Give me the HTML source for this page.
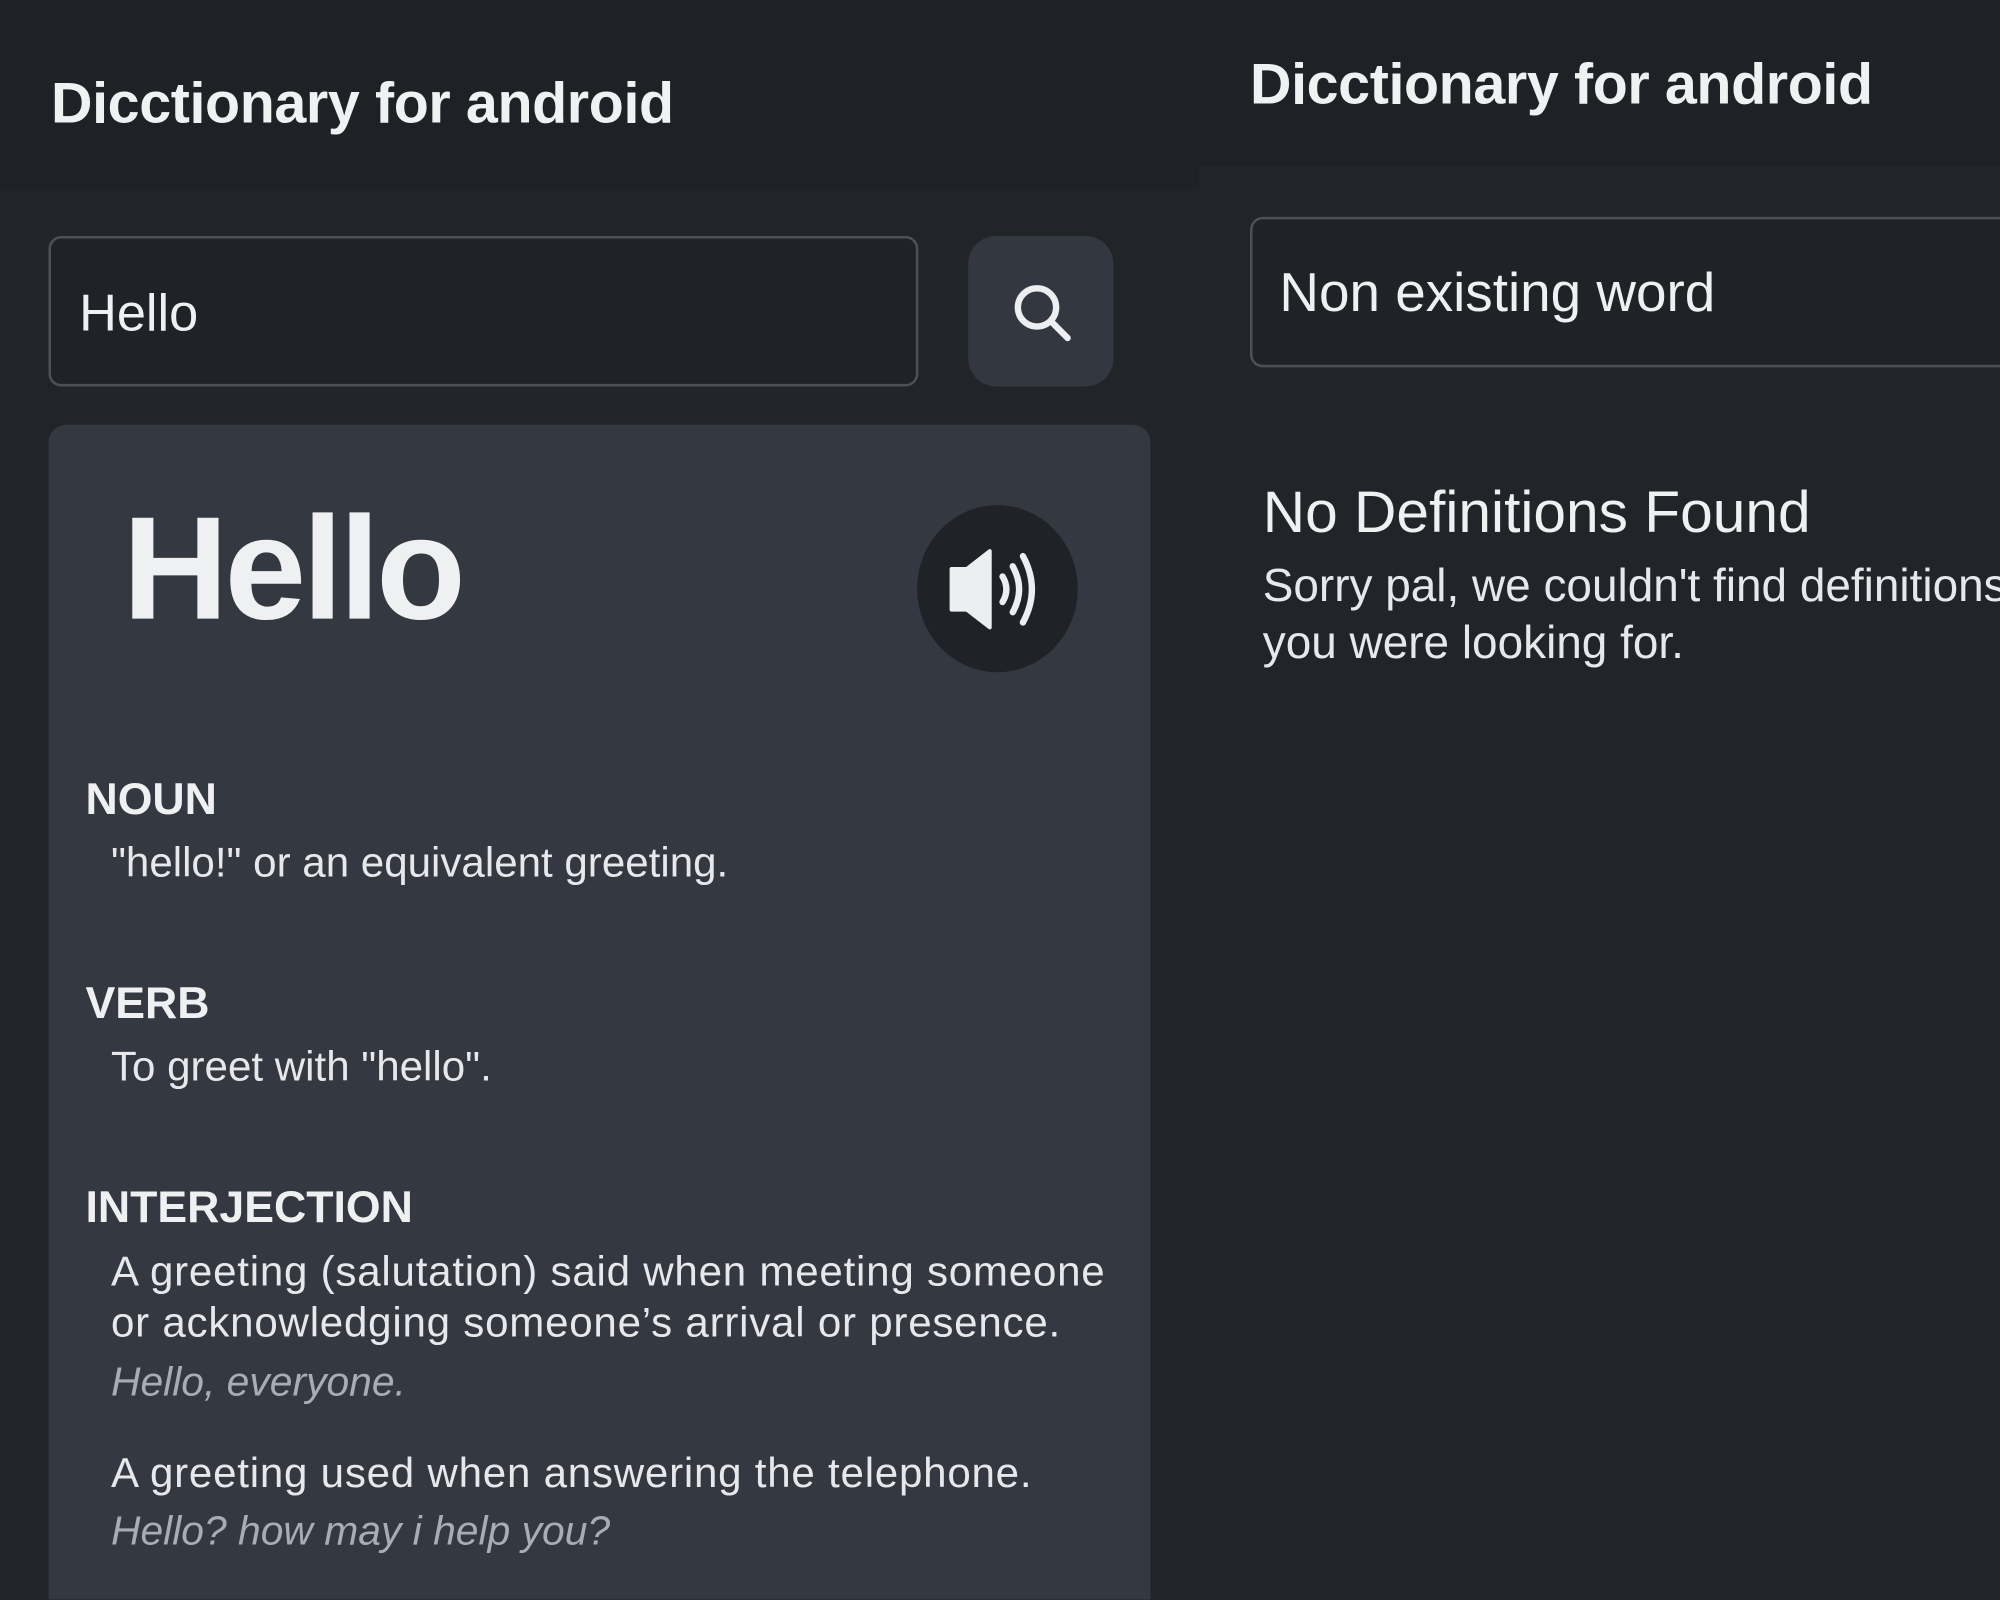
<!DOCTYPE html>
<html><head><meta charset="utf-8"><style>
*{margin:0;padding:0;box-sizing:border-box}
html,body{width:2000px;height:1600px;overflow:hidden;background:#212429}
#w{position:absolute;left:0;top:0;width:1568px;height:1254px;overflow:hidden;transform:scale(1.27551);transform-origin:0 0;font-family:"Liberation Sans",sans-serif;color:#eceef1}
.a{position:absolute;white-space:nowrap}
</style></head><body><div id="w">
<div class="a" style="left:0;top:0;width:940px;height:148px;background:#1e2126"></div>
<div class="a" style="left:940px;top:0;width:628px;height:130px;background:#1e2126"></div>
<div class="a" style="left:40px;top:55px;font-size:45px;font-weight:bold;letter-spacing:-0.3px;color:#f0f1f3">Dicctionary for android</div>
<div class="a" style="left:980px;top:40px;font-size:45px;font-weight:bold;letter-spacing:-0.3px;color:#f0f1f3">Dicctionary for android</div>

<div class="a" style="left:38px;top:185px;width:682px;height:118px;border:2px solid #4c5058;border-radius:10px;background:#1f2227"></div>
<div class="a" style="left:62px;top:222px;font-size:41px;color:#eef0f2">Hello</div>
<div class="a" style="left:759px;top:185px;width:114px;height:118px;border-radius:22px;background:#33373f"></div>
<svg class="a" style="left:791px;top:219px" width="52" height="52" viewBox="0 0 52 52"><circle cx="22" cy="22" r="15" fill="none" stroke="#eceef1" stroke-width="5"/><path d="M33 33L46 46" stroke="#eceef1" stroke-width="5" stroke-linecap="round"/></svg>

<div class="a" style="left:980px;top:170px;width:620px;height:118px;border:2px solid #4c5058;border-radius:10px;background:#1f2227"></div>
<div class="a" style="left:1003px;top:206px;font-size:43px;color:#eef0f2">Non existing word</div>
<div class="a" style="left:990px;top:374px;font-size:46px;color:#eef0f2">No Definitions Found</div>
<div class="a" style="left:990px;top:436px;font-size:36px;line-height:45px;color:#e6e8eb">Sorry pal, we couldn't find definitions for the word<br>you were looking for.</div>

<div class="a" style="left:38px;top:333px;width:864px;height:960px;border-radius:14px;background:#343840"></div>
<div class="a" style="left:96px;top:380px;font-size:115px;font-weight:bold;letter-spacing:-3px;color:#eef0f2">Hello</div>
<div class="a" style="left:719px;top:396px;width:126px;height:131px;border-radius:50%;background:#1f2227"></div>
<svg class="a" style="left:740px;top:420px" width="86" height="86" viewBox="0 0 86 86"><path d="M6 26h12l18-14v60L18 58H6z" fill="#eceef1" stroke="#eceef1" stroke-width="3" stroke-linejoin="round"/><path d="M46 32q6 10 0 20M54 24q10 18 0 36M62 16q14 26 0 52" fill="none" stroke="#eceef1" stroke-width="5" stroke-linecap="round"/></svg>

<div style="position:absolute;left:67px;top:607px;width:860px">
<div style="font-size:35px;font-weight:bold;color:#eef0f2">NOUN</div>
<div style="margin:10px 0 0 20px;font-size:33px;color:#e6e8eb">"hello!" or an equivalent greeting.</div>
<div style="margin-top:72px;font-size:35px;font-weight:bold;color:#eef0f2">VERB</div>
<div style="margin:10px 0 0 20px;font-size:33px;color:#e6e8eb">To greet with "hello".</div>
<div style="margin-top:72px;font-size:35px;font-weight:bold;color:#eef0f2">INTERJECTION</div>
<div style="margin:10px 0 0 20px;font-size:33px;line-height:40px;color:#e6e8eb;letter-spacing:0.6px">A greeting (salutation) said when meeting someone<br>or acknowledging someone’s arrival or presence.</div>
<div style="margin:8px 0 0 20px;font-size:32px;font-style:italic;color:#a9adb3">Hello, everyone.</div>
<div style="margin:34px 0 0 20px;font-size:33px;color:#e6e8eb;letter-spacing:0.6px">A greeting used when answering the telephone.</div>
<div style="margin:8px 0 0 20px;font-size:32px;font-style:italic;color:#a9adb3">Hello? how may i help you?</div>
</div>
</div></body></html>
